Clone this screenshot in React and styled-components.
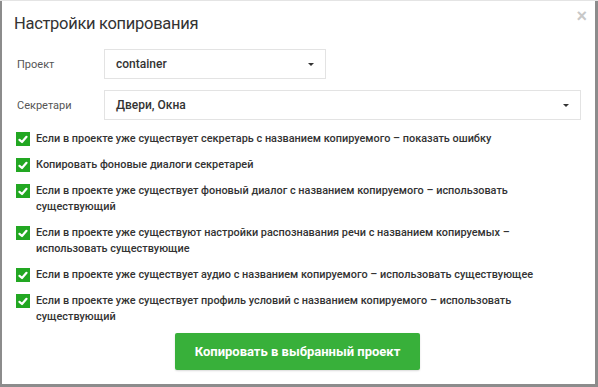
import React from "react";
import styled, { createGlobalStyle } from "styled-components";

const Global = createGlobalStyle`
  html, body { margin: 0; padding: 0; background: #8c8c8c; }
  body { font-family: Roboto, "Noto Sans", sans-serif; }
  * { box-sizing: border-box; }
`;

const Frame = styled.div`
  width: 598px;
  height: 387px;
  padding: 1px 3px 3px 2px;
  background: linear-gradient(#e4e4e4 0 1px, #8c8c8c 1px);
`;

const Modal = styled.div`
  position: relative;
  height: 100%;
  background: #fff;
  padding: 12px 14px 0 12px;
  display: flex;
  flex-direction: column;
`;

const Title = styled.h1`
  margin: 0;
  font-family: Roboto, "Liberation Sans", sans-serif;
  font-weight: 400;
  font-size: 16.5px;
  letter-spacing: -0.3px;
  line-height: 22px;
  color: #333;
`;

const Close = styled.span`
  position: absolute;
  top: 5px;
  right: 8px;
  font-family: "Liberation Sans", sans-serif;
  font-size: 18px;
  font-weight: 700;
  color: #c8c8c8;
  line-height: 20px;
`;

const Form = styled.div`
  margin-top: 14px;
  display: flex;
  flex-direction: column;
  gap: 11px;
`;

const Row = styled.div`
  display: flex;
  align-items: center;
`;

const Label = styled.div`
  width: 90px;
  padding-left: 3px;
  font-size: 11px;
  color: #555;
`;

const Select = styled.div`
  width: ${(p) => p.$w}px;
  height: 30px;
  border: 1px solid #e3e3e3;
  display: flex;
  align-items: center;
  justify-content: space-between;
  padding: 0 11px 0 11px;
  font-size: 12px;
  font-weight: 500;
  color: #333;
`;

const Caret = styled.span`
  width: 0;
  height: 0;
  border-left: 3px solid transparent;
  border-right: 3px solid transparent;
  border-top: 3px solid #333;
`;

const Checks = styled.div`
  margin-top: 11px;
  display: flex;
  flex-direction: column;
  gap: 10px;
`;

const Check = styled.div`
  display: flex;
  align-items: flex-start;
  gap: 6px;
  padding-left: 2px;
`;

const Box = styled.span`
  flex: none;
  width: 14px;
  height: 14px;
  margin-top: 1px;
  background: #22a722;
  display: flex;
  align-items: center;
  justify-content: center;
`;

const CheckText = styled.span`
  font-size: 10.9px;
  font-weight: 500;
  line-height: 16px;
  color: #333;
  max-width: 540px;
`;

const Footer = styled.div`
  margin-top: 8px;
  display: flex;
  justify-content: center;
`;

const Button = styled.button`
  width: 245px;
  height: 37px;
  border: none;
  border-radius: 2px;
  background: #38b03a;
  color: #fff;
  font-family: Roboto, "Noto Sans", sans-serif;
  font-size: 13px;
  font-weight: 700;
  box-shadow: 0 1px 2px rgba(0,0,0,0.15);
`;

const Tick = () => (
  <svg width="10" height="9" viewBox="0 0 10 9">
    <path d="M1.5 4.8 L4 7 L8.5 1.8" fill="none" stroke="#fff" strokeWidth="2.2" strokeLinecap="round" strokeLinejoin="round" />
  </svg>
);

const items = [
  "Если в проекте уже существует секретарь с названием копируемого – показать ошибку",
  "Копировать фоновые диалоги секретарей",
  "Если в проекте уже существует фоновый диалог с названием копируемого – использовать существующий",
  "Если в проекте уже существуют настройки распознавания речи с названием копируемых – использовать существующие",
  "Если в проекте уже существует аудио с названием копируемого – использовать существующее",
  "Если в проекте уже существует профиль условий с названием копируемого – использовать существующий",
];

export default function App() {
  return (
    <>
      <Global />
      <Frame>
        <Modal>
          <Close>×</Close>
          <Title>Настройки копирования</Title>
          <Form>
            <Row>
              <Label>Проект</Label>
              <Select $w={222}>
                <span>container</span>
                <Caret />
              </Select>
            </Row>
            <Row>
              <Label>Секретари</Label>
              <Select $w={477}>
                <span>Двери, Окна</span>
                <Caret />
              </Select>
            </Row>
          </Form>
          <Checks>
            {items.map((t, i) => (
              <Check key={i}>
                <Box><Tick /></Box>
                <CheckText>{t}</CheckText>
              </Check>
            ))}
          </Checks>
          <Footer>
            <Button>Копировать в выбранный проект</Button>
          </Footer>
        </Modal>
      </Frame>
    </>
  );
}
